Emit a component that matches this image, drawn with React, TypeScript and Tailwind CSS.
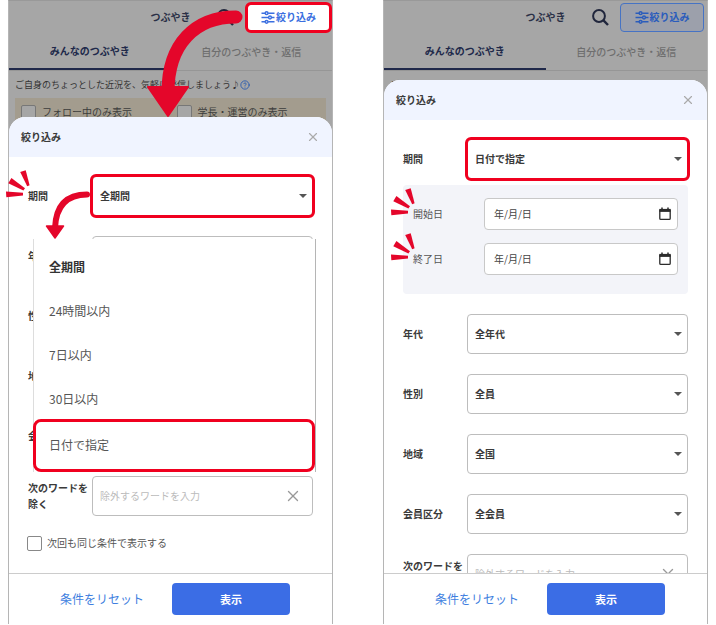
import { useState } from 'react'
import type { ReactNode } from 'react'
import { CircleHelp, X } from 'lucide-react'

const RED = '#e4062a'

const FilterIcon = () => (
  <svg width="14" height="13" viewBox="0 0 14 13" fill="none" stroke="currentColor" strokeWidth="1.5">
    <path d="M0.5 2.2H4M7.2 2.2H13.5M0.5 6.5H7.4M10.6 6.5H13.5M0.5 10.8H4M7.2 10.8H13.5" />
    <circle cx="5.6" cy="2.2" r="1.4" />
    <circle cx="9" cy="6.5" r="1.4" />
    <circle cx="5.6" cy="10.8" r="1.4" />
  </svg>
)

const SearchIcon = () => (
  <svg width="17" height="17" viewBox="0 0 17 17" fill="none" stroke="#20263c" strokeWidth="2">
    <circle cx="7" cy="7" r="5.9" />
    <path d="M11.2 11.2L16 16" strokeWidth="2.4" />
  </svg>
)

const CalendarIcon = () => (
  <svg width="12" height="14" viewBox="0 0 12 14" fill="none" stroke="#2b2b2b">
    <path d="M0.8 3.2V11.4Q0.8 12.4 1.8 12.4H10.2Q11.2 12.4 11.2 11.4V3.2Z" strokeWidth="1.3" />
    <path d="M0.4 3.4H11.6" strokeWidth="3" />
    <path d="M3 0.4V3M9 0.4V3" strokeWidth="1.5" />
  </svg>
)

const Sparks = () => (
  <svg
    className="pointer-events-none absolute -top-[18px] -left-[22px]"
    width="24"
    height="28"
    viewBox="0 0 24 28"
    fill={RED}
  >
    <path d="M0 21.600L0.300 27.200L17 25.500V22.700Z" />
    <path d="M5.400 8L2.300 13.200L17.400 20.600L19 18.200Z" />
    <path d="M14.200 2L19.700 0.300L23.600 15.200L21.200 16.200Z" />
  </svg>
)

type SelectRowProp = {
  id: string
  label: string
  options: string[]
  isMarked?: boolean
  hasSparks?: boolean
}
const SelectRow = ({ id, label, options, isMarked, hasSparks }: SelectRowProp) => {
  const mark = isMarked ? ' outline-3 -outline-offset-1 outline-[#f0001f]' : ''

  return (
    <div className="flex items-center">
      <label htmlFor={id} className="relative w-16 shrink-0 font-bold">
        {label}
        {hasSparks && <Sparks />}
      </label>
      <div className="relative flex-1">
        <select
          id={id}
          className={
            'block h-10 w-full appearance-none rounded border border-[#bdbdbd] bg-white px-[7px] font-bold' +
            mark
          }
        >
          {options.map((e) => (
            <option key={e}>{e}</option>
          ))}
        </select>
        <svg
          className="pointer-events-none absolute top-[18px] right-1.5"
          width="8"
          height="4"
          viewBox="0 0 8 4"
          fill="#555"
        >
          <path d="M0 0H8L4 4Z" />
        </svg>
      </div>
    </div>
  )
}

const DateRow = ({ id, label }: { id: string; label: string }) => (
  <div className="flex items-center">
    <label htmlFor={id} className="relative w-[71px] shrink-0 text-[#555]">
      {label}
      <Sparks />
    </label>
    <div className="flex h-8 flex-1 items-center rounded border border-[#c8c8c8] bg-white pr-1.5 pl-[9px]">
      <input
        id={id}
        type="text"
        placeholder="年/月/日"
        className="min-w-0 flex-1 outline-none placeholder:text-[#444]"
      />
      <button type="button" aria-label="カレンダーを開く">
        <CalendarIcon />
      </button>
    </div>
  </div>
)

const WordRow = ({ id }: { id: string }) => (
  <div className="flex items-center">
    <label htmlFor={id} className="w-16 shrink-0 font-bold">
      次のワードを
      <br />
      除く
    </label>
    <div className="flex h-10 flex-1 items-center rounded border border-[#bdbdbd] bg-white pr-2.5 pl-[7px]">
      <input
        id={id}
        type="text"
        placeholder="除外するワードを入力"
        className="min-w-0 flex-1 outline-none placeholder:text-[#bbb]"
      />
      <button type="button" aria-label="クリア" className="text-[#999]">
        <X className="size-[18px]" strokeWidth={1.8} />
      </button>
    </div>
  </div>
)

const CommonRows = ({ prefix }: { prefix: string }) => (
  <>
    <SelectRow id={prefix + '-age'} label="年代" options={['全年代']} />
    <SelectRow id={prefix + '-gender'} label="性別" options={['全員']} />
    <SelectRow id={prefix + '-area'} label="地域" options={['全国']} />
    <SelectRow id={prefix + '-type'} label="会員区分" options={['全会員']} />
    <WordRow id={prefix + '-word'} />
  </>
)

const PeriodMenu = () => {
  const items = ['全期間', '24時間以内', '7日以内', '30日以内']

  return (
    <ul className="absolute top-[63px] -right-[3px] left-[5px] z-10 border-x border-r-[#b5b5b5] border-l-[#ddd] bg-white pt-1.5 text-xs text-[#555]">
      {items.map((e, i) => (
        <li key={e}>
          <button
            type="button"
            className={
              'block h-11 w-full px-[15px] text-left' + (i === 0 ? ' font-bold text-[#333]' : '')
            }
          >
            {e}
          </button>
        </li>
      ))}
      <li className="-mt-0.5 -ml-px">
        <button
          type="button"
          className="block h-[53px] w-full rounded-lg border-3 border-[#f0001f] px-[13px] pb-0.5 text-left"
        >
          日付で指定
        </button>
      </li>
    </ul>
  )
}

type PhoneProp = {
  isFilterMarked?: boolean
  sheetTop: string
  children: ReactNode
}
const Phone = ({ isFilterMarked, sheetTop, children }: PhoneProp) => {
  const filterStyle = isFilterMarked
    ? 'h-[31px] w-[87px] rounded-md border-3 border-[#f0001f] bg-white text-[#3b6fe0]'
    : 'mr-[3px] h-[29px] w-[84px] rounded border border-[#4673c4] bg-[#9ca0ab] text-[#2a5cbc]'

  return (
    <div className="relative flex h-full flex-col border-x border-t border-x-[#b5b5b5] border-t-[#999] bg-[#a6a6a6]">
      <header className="grid h-8 grid-cols-[1fr_auto_1fr] items-center">
        <span />
        <h1 className="font-bold text-[#2a3046]">つぶやき</h1>
        <div className="flex items-center justify-end gap-[11px]">
          <button type="button" aria-label="検索">
            <SearchIcon />
          </button>
          <button
            type="button"
            className={'flex items-center justify-center gap-px font-bold ' + filterStyle}
          >
            <FilterIcon />
            絞り込み
          </button>
        </div>
      </header>

      <nav className="grid h-[38px] grid-cols-2 border-b border-[#969696]">
        <button type="button" className="border-b-2 border-[#20294a] font-bold text-[#20294a]">
          みんなのつぶやき
        </button>
        <button type="button" className="font-medium text-[#6e6e6e]">
          自分のつぶやき・返信
        </button>
      </nav>

      <div className="flex h-[27px] items-center px-1.5 text-[9px] text-[#333]">
        ご自身のちょっとした近況を、気軽に発信しましょう♪
        <CircleHelp className="size-2.5 text-[#1f55b0]" />
      </div>

      <div className="mx-1.5 flex bg-[#a39c8e] text-[#3c3c3c]">
        <label className="flex flex-1 items-center gap-1.5 px-1.5 py-1.5">
          <input
            type="checkbox"
            className="size-[15px] appearance-none rounded-xs border border-[#777] bg-[#a6a6a6]"
          />
          フォロー中のみ表示
        </label>
        <label className="flex flex-1 items-center gap-1.5 px-1.5 py-1.5">
          <input
            type="checkbox"
            className="size-[15px] appearance-none rounded-xs border border-[#777] bg-[#a6a6a6]"
          />
          学長・運営のみ表示
        </label>
      </div>

      <section className={'absolute inset-x-0 bottom-0 flex flex-col rounded-t-2xl bg-white ' + sheetTop}>
        <div className="flex h-10 shrink-0 items-center justify-between rounded-t-2xl bg-[#f0f4ff] px-3">
          <h2 className="font-bold">絞り込み</h2>
          <button type="button" aria-label="閉じる" className="text-[#aaa]">
            <X className="size-[14px]" strokeWidth={2} />
          </button>
        </div>

        <div className="min-h-0 flex-1 overflow-y-clip px-[19px] pt-[19px]">{children}</div>

        <div className="flex h-[51px] shrink-0 items-center border-t border-[#ccc] bg-white pr-[42px] pl-[51px]">
          <button type="button" className="text-left text-xs text-[#3f7fe0]">
            条件をリセット
          </button>
          <button
            type="button"
            className="ml-auto h-8 w-[118px] rounded bg-[#3b6de5] text-[11px] font-bold text-white"
          >
            表示
          </button>
        </div>
      </section>
    </div>
  )
}

const App = () => {
  const [isKept, setIsKept] = useState(false)

  return (
    <main className="grid h-screen grid-cols-2 gap-[50px] bg-white px-2 pb-px font-['Noto_Sans_CJK_JP','Noto_Sans',sans-serif] text-[10px] leading-4 text-[#3a3a3a]">
      <div className="relative">
        <Phone isFilterMarked sheetTop="top-[116px]">
          <div className="relative flex flex-col gap-5">
            <SelectRow
              id="all-period"
              label="期間"
              options={['全期間', '24時間以内', '7日以内', '30日以内', '日付で指定']}
              isMarked
              hasSparks
            />
            <CommonRows prefix="all" />
            <PeriodMenu />
          </div>
          <label className="mt-[19px] -ml-px flex items-center gap-[5px] text-[#555]">
            <input
              type="checkbox"
              checked={isKept}
              onChange={(e) => setIsKept(e.target.checked)}
              className="size-[15px] appearance-none rounded-xs border border-[#888] bg-white checked:bg-[#3b6de5]"
            />
            次回も同じ条件で表示する
          </label>
        </Phone>

        {/* filter button -> sheet */}
        <svg
          className="pointer-events-none absolute top-2 left-[138px]"
          width="98"
          height="110"
          viewBox="0 0 98 110"
          fill="none"
          stroke={RED}
        >
          <path d="M90 9C49 9 22 36 22 84" strokeWidth="13" strokeLinecap="round" />
          <path d="M2 79H42L22 108Z" fill={RED} strokeWidth="2" strokeLinejoin="round" />
        </svg>

        {/* period select -> menu */}
        <svg
          className="pointer-events-none absolute top-[190px] left-[37px] z-10"
          width="48"
          height="50"
          viewBox="0 0 48 50"
          fill="none"
          stroke={RED}
        >
          <path d="M42 4.500C23 4.500 11 14 10 38" strokeWidth="6" strokeLinecap="round" />
          <path d="M1.500 36H18.500L10 48Z" fill={RED} strokeWidth="1.500" strokeLinejoin="round" />
        </svg>
      </div>

      <Phone sheetTop="top-[79px]">
        <SelectRow id="date-period" label="期間" options={['日付で指定']} isMarked />
        <div className="mt-1.5 mb-5 flex flex-col gap-[13px] rounded bg-[#f3f4f9] px-[10px] pt-[13px] pb-[19px]">
          <DateRow id="date-start" label="開始日" />
          <DateRow id="date-end" label="終了日" />
        </div>
        <div className="flex flex-col gap-5">
          <CommonRows prefix="date" />
        </div>
      </Phone>
    </main>
  )
}

export default App
